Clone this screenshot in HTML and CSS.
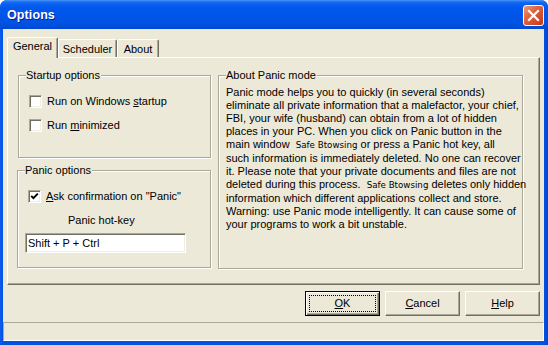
FILE: index.html
```html
<!DOCTYPE html>
<html>
<head>
<meta charset="utf-8">
<link rel="stylesheet" href="styles.css">
</head>
<body>
<div class="window">
  <div class="titlebar">
    <span class="title">Options</span>
    <span class="close"><svg width="19" height="19" viewBox="0 0 19 19"><path d="M5 5 L14 14 M14 5 L5 14" stroke="#fff" stroke-width="2.2" stroke-linecap="square"/></svg></span>
  </div>
  <div class="client">
    <div class="tabs">
      <div class="tab active tab-general">General</div>
      <div class="tab tab-scheduler">Scheduler</div>
      <div class="tab tab-about">About</div>
    </div>
    <div class="panel">
      <div class="left-col">
        <div class="group startup">
          <div class="group-title">Startup options</div>
          <div class="check-row first"><span class="checkbox"></span><span>Run on Windows <u>s</u>tartup</span></div>
          <div class="check-row second"><span class="checkbox"></span><span>Run <u>m</u>inimized</span></div>
        </div>
        <div class="group panic">
          <div class="group-title">Panic options</div>
          <div class="check-row first"><span class="checkbox"><svg width="9" height="9" viewBox="0 0 9 9"><path d="M1.2 3.8 L3.4 6.2 L7.8 1.6" fill="none" stroke="#000" stroke-width="1.9"/></svg></span><span><u>A</u>sk confirmation on "Panic"</span></div>
          <div class="hotkey-label">Panic hot-key</div>
          <div class="textbox">Shift + P + Ctrl</div>
        </div>
      </div>
      <div class="group about">
        <div class="group-title">About Panic mode</div>
        <div class="about-text">
          <div>Panic mode helps you to quickly (in several seconds)</div>
          <div>eliminate all private information that a malefactor, your chief,</div>
          <div>FBI, your wife (husband) can obtain from a lot of hidden</div>
          <div>places in your PC. When you click on Panic button in the</div>
          <div>main window &nbsp;<span class="brand">Safe Btowsing</span> or press a Panic hot key, all</div>
          <div>such information is immediately deleted. No one can recover</div>
          <div>it. Please note that your private documents and files are not</div>
          <div>deleted during this process. &nbsp;<span class="brand">Safe Btowsing</span> deletes only hidden</div>
          <div>information which different applications collect and store.</div>
          <div>Warning: use Panic mode intelligently. It can cause some of</div>
          <div>your programs to work a bit unstable.</div>
        </div>
      </div>
    </div>
    <div class="buttons">
      <div class="btn default"><span class="focus"><u>O</u>K</span></div>
      <div class="btn"><span class="label"><u>C</u>ancel</span></div>
      <div class="btn"><span class="label"><u>H</u>elp</span></div>
    </div>
    <div class="statusbar"></div>
  </div>
</div>
</body>
</html>
```
FILE: styles.css
```css
* { box-sizing: border-box; }
body {
  margin: 0;
  background: #fff;
  font-family: "Liberation Sans", Arial, sans-serif;
  font-size: 11px;
  color: #000;
}
.window {
  width: 548px;
  height: 345px;
  background: linear-gradient(90deg, #0A5CF0 0, #0452E0 3px, #0452E0 544px, #0046D4 548px);
  border-radius: 7px 7px 0 0;
  display: flex;
  flex-direction: column;
  overflow: hidden;
}
.titlebar {
  height: 29px;
  flex: none;
  display: flex;
  align-items: flex-start;
  justify-content: space-between;
  padding: 0 4px 0 7px;
  background: linear-gradient(180deg, #4A95F8 0, #1A6BF2 2px, #0862EE 4px, #0058EE 8px, #0055E8 16px, #0053E2 23px, #004CD8 27px, #0046D0 29px);
}
.title {
  margin-top: 8px;
  font-weight: bold;
  font-size: 12.5px;
  line-height: 15px;
  color: #fff;
  text-shadow: 1px 1px 0 #0A1E8C;
  letter-spacing: 0.1px;
}
.close {
  margin-top: 5px;
  width: 21px;
  height: 21px;
  border: 1px solid #fff;
  border-radius: 3px;
  background: linear-gradient(135deg, #EC9A7D 0, #DF6342 40%, #CF4A27 75%, #C0391A 100%);
  display: flex;
  align-items: center;
  justify-content: center;
}
.close svg { display: block; }
.client {
  flex: 1;
  margin: 0 4px 4px 3px;
  background: #ECE9D8;
  padding: 8px 4px 0 4px;
  display: flex;
  flex-direction: column;
}
.tabs {
  height: 20px;
  display: flex;
  align-items: flex-end;
  position: relative;
  z-index: 1;
}
.tab {
  height: 18px;
  border-top: 1px solid #fff;
  border-left: 1px solid #fff;
  border-right: 1px solid #716F64;
  border-radius: 2px 2px 0 0;
  box-shadow: inset -1px 0 0 #ACA899;
  background: #ECE9D8;
  display: flex;
  align-items: center;
  justify-content: center;
  padding-top: 1px;
  line-height: 13px;
}
.tab.active {
  height: 21px;
  margin-bottom: -1px;
  padding-top: 0;
  padding-bottom: 3px;
}
.tab-general { width: 51px; }
.tab-scheduler { width: 59px; }
.tab-about { width: 42px; }
.panel {
  height: 228px;
  flex: none;
  border-top: 1px solid #fff;
  border-left: 1px solid #fff;
  border-right: 1px solid #716F64;
  border-bottom: 1px solid #716F64;
  box-shadow: inset -1px -1px 0 #ACA899;
  padding: 17px 0 0 10px;
  display: flex;
  align-items: flex-start;
  gap: 7px;
}
.left-col {
  width: 193px;
  display: flex;
  flex-direction: column;
}
.group {
  border: 1px solid #ACA899;
  box-shadow: 1px 1px 0 #fff, inset 1px 1px 0 #fff;
}
.group-title {
  width: fit-content;
  margin: -7px 0 0 7px;
  padding-right: 1px;
  height: 13px;
  line-height: 13px;
  background: #ECE9D8;
  white-space: nowrap;
}
.startup { height: 83px; }
.panic {
  height: 98px;
  margin-top: 12px;
  margin-left: -1px;
}
.about {
  width: 305px;
  height: 194px;
}
.check-row {
  display: flex;
  align-items: center;
  gap: 5px;
  height: 13px;
  line-height: 13px;
  margin-left: 10px;
  white-space: nowrap;
}
.check-row.first { margin-top: 13px; }
.check-row.second { margin-top: 11px; }
.checkbox {
  width: 13px;
  height: 13px;
  flex: none;
  background: #fff;
  border-top: 1px solid #ACA899;
  border-left: 1px solid #ACA899;
  border-right: 1px solid #fff;
  border-bottom: 1px solid #fff;
  box-shadow: inset 1px 1px 0 #716F64, inset -1px -1px 0 #F1EFE2;
  padding: 1px;
  display: flex;
}
.checkbox svg { display: block; }
.hotkey-label {
  margin-top: 11px;
  padding-left: 50px;
  line-height: 13px;
}
.textbox {
  margin: 6px 0 0 7px;
  width: 161px;
  height: 20px;
  background: #fff;
  border-top: 1px solid #ACA899;
  border-left: 1px solid #ACA899;
  border-right: 1px solid #fff;
  border-bottom: 1px solid #fff;
  box-shadow: inset 1px 1px 0 #716F64, inset -1px -1px 0 #F1EFE2;
  padding: 2px 0 0 2px;
  line-height: 14px;
  white-space: nowrap;
}
.about-text {
  margin-top: 4px;
  padding-left: 7px;
  line-height: 13px;
  white-space: nowrap;
}
.brand {
  font-family: "DejaVu Sans", Verdana, sans-serif;
  font-size: 8.7px;
}
.buttons {
  margin-top: 6px;
  display: flex;
  justify-content: flex-end;
  gap: 5px;
}
.btn {
  width: 75px;
  height: 25px;
  border-top: 1px solid #fff;
  border-left: 1px solid #fff;
  border-right: 1px solid #716F64;
  border-bottom: 1px solid #716F64;
  box-shadow: inset -1px -1px 0 #ACA899;
  display: flex;
  align-items: center;
  justify-content: center;
  line-height: 13px;
  padding-bottom: 1px;
}
.btn.default {
  border: 1px solid #000;
  box-shadow: inset 1px 1px 0 #fff, inset -1px -1px 0 #716F64, inset -2px -2px 0 #ACA899;
  padding: 3px;
}
.focus {
  flex: 1;
  align-self: stretch;
  border: 1px dotted #000;
  display: flex;
  align-items: center;
  justify-content: center;
}
.statusbar {
  flex: 1;
  margin: 6px -4px 0 -4px;
  border-top: 1px solid #ACA899;
  border-left: 1px solid #ACA899;
  border-right: 1px solid #fff;
  border-bottom: 1px solid #fff;
}
```
